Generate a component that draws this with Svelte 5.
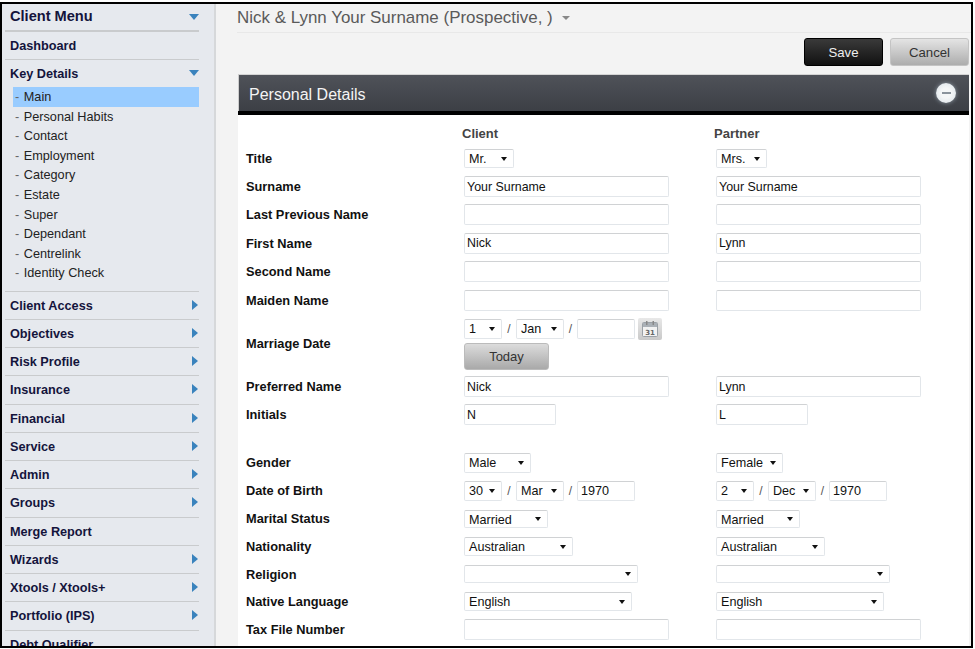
<script>
  const subs = ['Main', 'Personal Habits', 'Contact', 'Employment', 'Category', 'Estate', 'Super', 'Dependant', 'Centrelink', 'Identity Check'];
  const rest = [
    ['Client Access', 1], ['Objectives', 1], ['Risk Profile', 1], ['Insurance', 1], ['Financial', 1], ['Service', 1],
    ['Admin', 1], ['Groups', 1], ['Merge Report', 0], ['Wizards', 1], ['Xtools / Xtools+', 1], ['Portfolio (IPS)', 1], ['Debt Qualifier', 0]
  ];
  const sel = (v, w, h = 20) => ({ t: 's', v, w, h });
  const inp = (v, w = 205) => ({ t: 'i', v, w });
  const date = (d, dw, m, y) => ({ t: 'd', d, dw, m, y });
  const rows = [
    { label: 'Title', h: 27.5, c: sel('Mr.', 50, 19), p: sel('Mrs.', 51, 19) },
    { label: 'Surname', h: 28, c: inp('Your Surname'), p: inp('Your Surname') },
    { label: 'Last Previous Name', h: 28, c: inp(''), p: inp('') },
    { label: 'First Name', h: 29, c: inp('Nick'), p: inp('Lynn') },
    { label: 'Second Name', h: 28, c: inp(''), p: inp('') },
    { label: 'Maiden Name', h: 29, c: inp(''), p: inp('') },
    { label: 'Marriage Date', h: 58, c: { t: 'm' }, p: null },
    { label: 'Preferred Name', h: 28, c: inp('Nick'), p: inp('Lynn') },
    { label: 'Initials', h: 28, c: inp('N', 92), p: inp('L', 92) },
    { label: '', h: 20, c: null, p: null },
    { label: 'Gender', h: 28, c: sel('Male', 67), p: sel('Female', 67) },
    { label: 'Date of Birth', h: 28, c: date('30', 38, 'Mar', '1970'), p: date('2', 38, 'Dec', '1970') },
    { label: 'Marital Status', h: 28, c: sel('Married', 84, 18), p: sel('Married', 84, 18) },
    { label: 'Nationality', h: 28, c: sel('Australian', 109, 19), p: sel('Australian', 109, 19) },
    { label: 'Religion', h: 27, c: sel('', 174, 18), p: sel('', 174, 18) },
    { label: 'Native Language', h: 28, c: sel('English', 168, 19), p: sel('English', 168, 19) },
    { label: 'Tax File Number', h: 28, c: inp(''), p: inp('') }
  ];
</script>

{#snippet arrowDown()}
  <span class="tri-down"></span>
{/snippet}

{#snippet select(v, w, h)}
  <span class="sel" style="width:{w}px;height:{h}px">{v}<i></i></span>
{/snippet}

{#snippet dateParts(d, dw, m, y)}
  <span class="date">
    {@render select(d, dw, 20)}
    <span class="slash">/</span>
    {@render select(m, 48, 20)}
    <span class="slash">/</span>
    <input class="field year" value={y} />
  </span>
{/snippet}

{#snippet field(f)}
  {#if f}
    {#if f.t === 's'}
      {@render select(f.v, f.w, f.h)}
    {:else if f.t === 'i'}
      <input class="field" style="width:{f.w}px" value={f.v} />
    {:else if f.t === 'd'}
      {@render dateParts(f.d, f.dw, f.m, f.y)}
    {:else}
      <div class="marriage">
        <span class="date">
          {@render dateParts('1', 38, 'Jan', '')}
          <span class="cal">
            <svg width="18" height="18" viewBox="0 0 18 18">
              <rect x="1.5" y="2.5" width="15" height="14" rx="1" fill="#f2f2f2" stroke="#9aa0a6" />
              <rect x="2" y="3" width="14" height="4" fill="#aab0b6" />
              <rect x="5" y="1" width="1.5" height="4" fill="#888" />
              <rect x="11.5" y="1" width="1.5" height="4" fill="#888" />
              <text x="9" y="14.5" text-anchor="middle" class="caltext">31</text>
            </svg>
          </span>
        </span>
        <button class="today">Today</button>
      </div>
    {/if}
  {/if}
{/snippet}

<div class="frame">
  <aside class="side">
    <div class="item first">Client Menu {@render arrowDown()}</div>
    <div class="item">Dashboard</div>
    <div class="group">
      <div class="gh">Key Details {@render arrowDown()}</div>
      <ul>
        {#each subs as s, i}
          <li class:on={i === 0}><span class="dash">-</span> {s}</li>
        {/each}
      </ul>
    </div>
    {#each rest as [name, arrow]}
      <div class="item">{name}{#if arrow}<span class="tri-right"></span>{/if}</div>
    {/each}
  </aside>

  <main class="main">
    <header class="head">
      <span>Nick &amp; Lynn Your Surname (Prospective, )</span>
      <span class="caret"></span>
    </header>
    <div class="tools">
      <button class="btn save">Save</button>
      <button class="btn cancel">Cancel</button>
    </div>
    <section class="panel">
      <div class="ptitle">
        <span>Personal Details</span>
        <span class="minus"><b></b></span>
      </div>
      <div class="pbody">
        <div class="row colhead" style="height:23.5px">
          <span></span><span class="c1">Client</span><span class="c1">Partner</span>
        </div>
        {#each rows as r}
          <div class="row" style="height:{r.h}px">
            <span class="lab">{r.label}</span>
            <div>{@render field(r.c)}</div>
            <div>{@render field(r.p)}</div>
          </div>
        {/each}
      </div>
    </section>
  </main>
</div>

<style>
  :global(body) { margin: 0; background: #fff; overflow: hidden; }
  .frame {
    box-sizing: border-box;
    width: 973px;
    height: 646px;
    margin-top: 2px;
    border: 2px solid #000;
    display: flex;
    overflow: hidden;
    background: #f3f3f3;
    font-family: "Liberation Sans", Arial, sans-serif;
    font-size: 12.5px;
    color: #111;
  }
  .side {
    flex: none;
    background: #e6e9ee;
    border-right: 2px solid #d6d8da;
    padding-left: 3px;
    width: 209px;
  }
  .item, .gh {
    width: 194px;
    height: 28.25px;
    box-sizing: border-box;
    border-bottom: 1px solid #c9cbcd;
    padding-left: 5px;
    line-height: 28px;
    font-weight: 700;
    font-size: 12.7px;
    color: #14143c;
    position: relative;
    white-space: nowrap;
  }
  .first { height: 28px; line-height: 25px; border-bottom: 2px solid #c9cbcd; font-size: 14.6px; }
  .gh { border: 0; height: 27px; line-height: 28px; }
  .group { width: 194px; border-bottom: 1px solid #c9cbcd; padding-bottom: 8px; }
  ul { list-style: none; margin: 0 0 0 8px; padding: 0; }
  li { height: 19.55px; line-height: 20px; padding-left: 2px; color: #222; font-size: 12.7px; }
  li.on { background: #99ccff; }
  .dash { color: #666; margin-right: 1px; }
  .tri-down {
    position: absolute;
    right: 0;
    top: 10px;
    width: 0; height: 0;
    border-left: 5px solid transparent;
    border-right: 5px solid transparent;
    border-top: 6px solid #3a83bd;
  }
  .tri-right {
    position: absolute;
    right: 1px;
    top: 8px;
    width: 0; height: 0;
    border-top: 5px solid transparent;
    border-bottom: 5px solid transparent;
    border-left: 6px solid #3a83bd;
  }
  .main { flex: 1; min-width: 0; padding-left: 21px; display: flex; flex-direction: column; }
  .head {
    flex: none;
    height: 27px;
    border-bottom: 1px solid #e8e8e8;
    font-size: 16.95px;
    line-height: 23px;
    color: #5a5a5a;
    display: flex;
    align-items: center;
    gap: 9px;
    padding-bottom: 1px;
  }
  .caret {
    width: 0; height: 0;
    border-left: 4px solid transparent;
    border-right: 4px solid transparent;
    border-top: 4px solid #888;
  }
  .tools {
    flex: none;
    display: flex;
    justify-content: flex-end;
    gap: 7px;
    padding: 5px 2px 0 0;
    box-sizing: border-box;
    height: 41px;
  }
  .btn {
    width: 79px;
    height: 28px;
    border-radius: 3px;
    font: 13.2px "Liberation Sans", Arial, sans-serif;
    padding: 1px 0 0;
  }
  .save { background: linear-gradient(#3a3a3a, #111); border: 1px solid #000; color: #eee; }
  .cancel { background: linear-gradient(#e4e4e4, #adadad); border: 1px solid #c4c4c4; color: #333; }
  .panel { margin: 0 0 0 1px; background: #fff; width: 731px; flex: 1; display: flex; flex-direction: column; }
  .ptitle {
    flex: none;
    height: 37px;
    box-sizing: border-box;
    background: linear-gradient(#4f5259, #3c3f45);
    border-top: 1px solid #d4d4d4;
    border-left: 1px solid #ccc;
    padding: 0 13px 0 10px;
    color: #f4f4f4;
    font-size: 16px;
    display: flex;
    align-items: center;
    justify-content: space-between;
  }
  .ptitle > span:first-child { padding-top: 3px; }
  .minus {
    width: 20px; height: 20px;
    border-radius: 50%;
    background: radial-gradient(#f4f6f7 35%, #d8e0e6 100%);
    box-shadow: 0 0 4px #8f9aa5;
    display: flex;
    align-items: center;
    justify-content: center;
  }
  .minus b { width: 9px; height: 2px; background: #8a939c; display: block; }
  .pbody { flex: 1; border-top: 4px solid #000; padding-top: 6.5px; background: #fff; }
  .row {
    display: grid;
    grid-template-columns: 218px 252px 1fr;
    padding-left: 8px;
    align-items: center;
  }
  .lab { font-weight: 700; font-size: 12.8px; color: #111; white-space: nowrap; }
  .colhead { font-weight: 700; color: #444; font-size: 13px; }
  .c1 { margin-left: -2px; }
  .sel {
    display: inline-block;
    vertical-align: middle;
    box-sizing: border-box;
    position: relative;
    background: #fff;
    border: 1px solid #e2e6ea;
    border-top-color: #d0d2d4;
    border-radius: 2px;
    padding-left: 4px;
    font-size: 12.6px;
    line-height: 18px;
    color: #111;
  }
  .sel i {
    position: absolute;
    right: 6px;
    top: 50%;
    margin-top: -2px;
    width: 0; height: 0;
    border-left: 3.5px solid transparent;
    border-right: 3.5px solid transparent;
    border-top: 4px solid #111;
  }
  .field {
    display: inline-block;
    vertical-align: middle;
    box-sizing: border-box;
    height: 21px;
    background: #fff;
    border: 1px solid #e2e6ea;
    border-top-color: #d0d2d4;
    border-radius: 2px;
    padding: 0 2px;
    margin: 0;
    font: 12.4px "Liberation Sans", Arial, sans-serif;
    color: #111;
    outline: none;
  }
  .year { width: 58px; height: 20px; padding-left: 3px; font-size: 12.6px; }
  .date { display: inline-flex; align-items: center; }
  .slash { width: 14px; text-align: center; color: #555; font-size: 12px; }
  .slash:last-of-type { width: 13px; }
  .cal {
    width: 24px; height: 22px;
    margin-left: 3px;
    box-sizing: border-box;
    border-radius: 2px;
    background: linear-gradient(#e8e8e8, #c9c9c9);
    display: flex;
    align-items: center;
    justify-content: center;
  }
  .caltext { font: 700 7px "DejaVu Sans", sans-serif; fill: #666; }
  .marriage { display: flex; flex-direction: column; gap: 3px; align-items: flex-start; }
  .today {
    width: 85px; height: 27px;
    border: 1px solid #bbb;
    border-radius: 3px;
    background: linear-gradient(#dcdcdc, #a9a9a9);
    font: 13px "Liberation Sans", Arial, sans-serif;
    color: #333;
    padding: 0;
  }
</style>
